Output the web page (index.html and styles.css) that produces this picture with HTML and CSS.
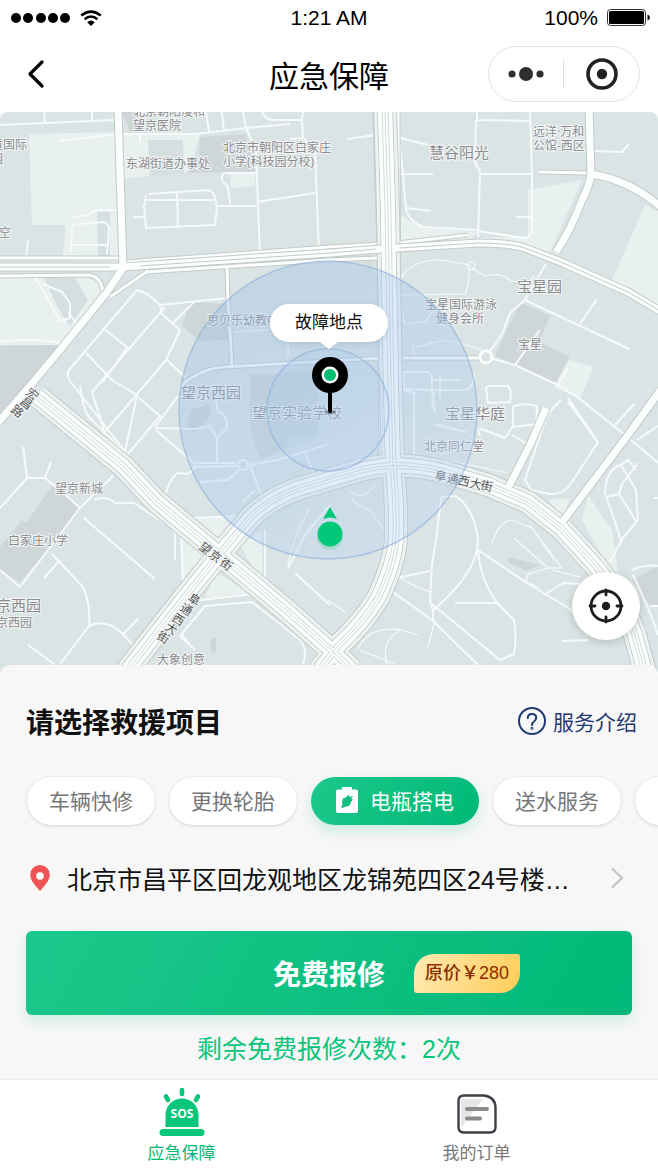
FILE: index.html
```html
<!DOCTYPE html>
<html lang="zh-CN">
<head>
    <meta charset="UTF-8">
    <meta name="viewport" content="width=device-width, initial-scale=1.0">
    <title>应急保障</title>
    <link rel="stylesheet" href="styles.css">
</head>
<body>
    <div class="page">
        <div class="status-bar">
            <div class="status-left">
                <svg width="60" height="12" viewBox="0 0 60 12">
                    <circle cx="5" cy="6" r="5"/><circle cx="17" cy="6" r="5"/><circle cx="30" cy="6" r="5"/><circle cx="42" cy="6" r="5"/><circle cx="54" cy="6" r="5"/>
                </svg>
                <svg width="22" height="17" viewBox="0 0 22 17" fill="none" stroke="#000" stroke-width="2.6">
                    <path d="M1.2 5.6Q11-2.4 20.8 5.6"/>
                    <path d="M4.6 9.2Q11 3.8 17.4 9.2"/>
                    <path d="M7.2 12.2Q11 8.8 14.8 12.2L11 16Z" fill="#000" stroke="none"/>
                </svg>
            </div>
            <span class="status-time">1:21 AM</span>
            <div class="status-right">
                <span>100%</span>
                <svg width="43" height="18" viewBox="0 0 43 18">
                    <rect x="0.5" y="0.5" width="38" height="16" rx="3" fill="#fff" stroke="#333"/>
                    <rect x="2" y="2" width="35" height="13" rx="1.5"/>
                    <path d="M40.500 5.500q2.500 1 2.500 3t-2.500 3z"/>
                </svg>
            </div>
        </div>

        <header class="nav-bar">
            <button class="back" type="button" aria-label="返回">
                <svg width="18" height="30" viewBox="0 0 18 30" fill="none" stroke="#000" stroke-width="3.200" stroke-linecap="round" stroke-linejoin="round"><path d="M15 3L3 15l12 12"/></svg>
            </button>
            <h1>应急保障</h1>
            <div class="capsule">
                <button type="button" aria-label="更多">
                    <svg width="36" height="16" viewBox="0 0 36 16" fill="#2e2e2e"><circle cx="4" cy="8" r="3.600"/><circle cx="18" cy="8" r="7"/><circle cx="32" cy="8" r="3.600"/></svg>
                </button>
                <button type="button" aria-label="关闭">
                    <svg width="32" height="32" viewBox="0 0 32 32"><circle cx="16" cy="16" r="14" fill="none" stroke="#222" stroke-width="3.600"/><circle cx="16" cy="16" r="5.200" fill="#222"/></svg>
                </button>
            </div>
        </header>

        <main>
            <section class="map" aria-label="地图">
                <svg class="map-canvas" viewBox="0 112 658 560" preserveAspectRatio="xMidYMid slice">
                    <defs>
                        <g id="highways">
                            <path d="M37 396L123 466L157 502L217 552L287 611L330 649L352 670"/>
                            <path d="M126 672L187 594L217 557L250 518Q270 498 300 488L361 470Q400 460 445 472L488 485L528 502L561 528L595 565Q622 598 635 635L645 672"/>
                            <path d="M385 108L388 210L391 390L393 465Q397 510 396 535Q396 560 378 598Q364 622 338 646L318 672"/>
                        </g>
                        <g id="roads">
                            <path d="M0 267H122L330 253L381 249L478 243Q510 243 525 248L561 262L628 292L662 312"/>
                            <path d="M118 108L123 268L107 292L60 350L35 380L-4 425"/>
                            <path d="M589 108L591 173Q590 185 582 200Q570 232 556 252"/>
                            <path d="M591 174Q630 180 662 208"/>
                            <path d="M662 388L628 435L563 521"/>
                            <path d="M508 488L530 445L546 408"/>
                        </g>
                        <g id="side-roads">
                            <path d="M125 262L330 247L379 244M145 272L330 260L378 258M397 243L468 235"/>
                            <path d="M227 267L228 300L232 366M182 385Q200 369 224 367L330 361L381 358M395 358H480"/>
                            <path d="M0 258H118M0 276L88 275Q101 276 103 292"/>
                            <path d="M148 271L110 297M375 112L379 250L381 460M398 112L399 460"/>
                            <path d="M539 172L590 173"/>
                        </g>
                        <linearGradient id="range" x1="0" y1="0" x2="0.600" y2="1">
                            <stop offset="0" stop-color="#94bce6" stop-opacity="0.400"/>
                            <stop offset="1" stop-color="#b5d1f3" stop-opacity="0.340"/>
                        </linearGradient>
                    </defs>

                    <rect class="land" x="0" y="112" width="658" height="560"/>

                    <g class="block-light">
                        <path d="M29 134L115 132L121 262L62 260L66 225L32 225Z"/>
                        <path d="M122 135L200 133L190 172L123 179ZM230 174H255V186L231 188Z"/>
                        <path d="M0 276H85L112 290L62 345H0ZM528 190L582 180L550 252L478 238L528 236Z"/>
                        <path d="M396 210Q410 224 426 228L478 232L470 240L397 241ZM645 205L658 212V312L612 280Z"/>
                        <path d="M560 357L594 367L580 398L555 388ZM180 530L206 552L182 584ZM192 520L238 515L218 543ZM240 545L262 530V584ZM216 572L250 593L205 598Z"/>
                        <path d="M548 500L570 498L562 518ZM588 495L582 520L604 560L620 585L612 530Z"/>
                    </g>
                    <g class="block-dark">
                        <path d="M200 137L245 134L256 172L187 173L199 156ZM122 112L130 132L143 131L140 112Z"/>
                        <path d="M0 346L62 345L30 383L0 412ZM182 326L190 302L228 304V340L200 341Z"/>
                        <path d="M520 302L550 316L539 342L570 357L556 383L495 356Z"/>
                        <path d="M54 484L82 508L20 582L0 570V547L22 520L26 523ZM250 375L318 372V436L260 460L250 430Z"/>
                        <path d="M190 410L210 404V415L196 432L187 430ZM507 557L540 565L526 571L508 562ZM632 580L658 566V605L650 606ZM210 640L216 638V652L211 653Z"/>
                    </g>
                    <g class="block-mid">
                        <path d="M148 140H183L184 174L150 176ZM44 278L75 278L88 300L70 326L58 308Z"/>
                        <path d="M287 437L318 434L312 443L287 446ZM372 269V242H365V278ZM97 212H110V260H98Z"/>
                    </g>

                    <!-- lanes and footpaths -->
                    <g class="lane">
                        <path d="M0 125L115 120M44 112L45 124M92 112V121M60 141L117 134M123 134L196 134L246 128L290 124M140 134V142M206 112L209 132M222 112L224 131M243 112L246 128L256 150L258 208L260 252"/>
                        <path d="M262 112Q266 120 273 120H302L303 112M302 120L303 138L290 139M303 138L315 150L319 252M257 202L315 193M223 173H256M223 173Q220 182 226 184Q229 188 230 204M217 206H256"/>
                        <path d="M148 194L208 190Q213 191 215 197L217 207L215 225L146 228L144 206L146 195M145 200L214 200M177 192L178 227M133 217H144M73 217L88 215L96 210H118"/>
                        <path d="M71 252L72 228Q73 224 79 224L104 222Q109 224 109 229L107 254M72 245H108M28 240L26 258"/>
                        <path d="M34 275L60 321L70 318V303L62 292L43 284M68 312L78 325M0 342Q30 337 62 343"/>
                        <path d="M137 290L69 370Q66 376 70 381L127 454M137 290Q147 292 160 305L228 298M160 305L162 314L180 330M128 346L103 382M165 307L92 392L105 434M103 328L128 348M86 353L112 380L137 395M194 302L172 324M180 330L166 360L103 434M137 395L125 452"/>
                        <path d="M80 385Q84 415 92 420L124 452M167 360L188 380M138 397L160 416L123 460M178 396L155 427M156 430L196 465M156 428L195 429L210 426L217 438L227 428Q228 414 218 412L216 400M217 439V463M196 463H235M192 467L237 466M200 482L228 480L239 470M250 465L263 500M243 502L255 490M250 465L278 460L329 444M305 452L314 475"/>
                        <path d="M113 476L80 508L60 490L45 478H27L0 508M27 478L23 447M45 478L51 462M80 508L20 587L0 570M84 518L155 579M52 554L83 587Q91 605 89 626M60 560L44 578M89 626Q106 618 123 634L133 645M89 626L60 664M28 645L54 664M123 634L139 618M94 500Q106 495 115 503H134L175 530V560M165 495Q172 475 178 473L188 474L198 466"/>
                        <path d="M190 518L244 516M181 530L183 582M265 530V580L285 600M200 600L254 594L290 624M180 636L205 606L252 602L300 640Q308 650 303 664M180 636L195 650M182 634L190 645M295 573L330 605M288 568L305 535L330 505"/>
                        <path d="M398 112L400 138L428 145M399 138L403 174L406 210Q410 222 423 227L478 230M400 174H433M406 208L431 211M477 112V120L530 121M476 120L475 162L481 174H532M480 175L478 237M530 112L532 174L532 225Q532 238 524 238L478 231M516 217H531M347 139L376 135M595 151L622 152L629 144"/>
                        <path d="M525 300L629 349M580 324L597 299M515 365L540 330M546 264L525 300L510 313L502 334L486 357"/>
                        <path d="M486 357L515 365L558 385L580 399L625 435L662 466M558 385L568 368M615 425L634 404M568 398L598 442L570 485Q562 495 550 494L531 490L525 480M561 400Q550 410 546 418L525 480M568 402Q575 410 598 443"/>
                        <path d="M404 372H428L432 376V390L404 389L403 374ZM432 380H460M440 375V398M404 390L414 393V458M435 412L432 390H466Q474 388 474 374M434 424L466 432M488 386H508Q512 390 510 402L488 403L486 388ZM513 407Q521 402 537 406L536 424L513 427ZM479 428L505 438L513 426M434 410Q430 400 435 393M478 430L480 436M512 435L527 444"/>
                        <path d="M620 465Q606 470 605 493Q612 513 621 540L638 520L636 490L621 465L628 460L636 470M606 497L619 494L636 521M619 494L622 484L638 463M605 570L622 540M637 440L658 426M654 498H658"/>
                        <path d="M441 497Q438 530 432 565L430 600L433 611L440 604Q478 570 478 540Q475 510 456 496L442 497M478 550L530 585L575 612M478 550Q480 580 498 604L514 620Q517 640 514 654L500 660L432 604M433 611V620M390 590L432 620L478 665M455 603H497M397 578L430 571M544 595L563 583L580 584"/>
                        <path d="M633 575Q650 610 658 635M632 570Q645 564 658 566M650 606H658M562 641L588 640"/>
                    </g>
                    <g class="path">
                        <path d="M400 280Q410 260 440 260L470 265L468 285L465 294L400 295M472 268L485 276Q500 272 510 280L525 284L535 276M412 348L445 340Q470 345 486 352M400 305L405 324L425 322L432 312M414 358L413 348"/>
                        <path d="M349 490Q360 500 368 492L376 485M349 492L355 503L370 510L384 530M328 600L345 612M358 648Q370 625 402 630L418 635M360 650L394 664M387 664Q380 640 402 630M435 620L428 647M492 543Q500 520 512 520L532 528L562 568L548 568L514 538M530 525L554 560M548 568L528 574L526 582L540 588M580 577L552 570M446 460L508 473M344 374V360M288 340V358M230 332L270 330M398 577Q420 590 433 592M310 507Q292 540 288 565"/>
                    </g>
                    <circle class="path" cx="471" cy="266" r="4"/>
                    <circle class="lane" cx="243" cy="465" r="5"/>

                    <use href="#side-roads" class="road side-edge"/>
                    <use href="#side-roads" class="road side-fill"/>
                    <use href="#highways" class="road service-edge"/>
                    <use href="#highways" class="road service-fill"/>
                    <use href="#highways" class="road highway-edge"/>
                    <use href="#highways" class="road highway-fill"/>
                    <use href="#roads" class="road road-edge"/>
                    <use href="#roads" class="road road-fill"/>
                    <use href="#highways" class="road highway-fill"/>
                    <use href="#highways" class="road divider-edge"/>
                    <use href="#highways" class="road divider-fill"/>
                    <use href="#highways" class="road center-line"/>
                    <path class="road road-line" d="M0 267H110M140 266L330 253L376 249M400 248L478 243Q510 243 525 248L561 262L628 292L662 312"/>
                    <circle cx="486" cy="357" r="6" fill="#dbe4e4" stroke="#fff" stroke-width="2.500"/>

                    <g class="label">
                        <text x="133" y="116">北京朝阳凌和</text>
                        <text x="133" y="130">望京医院</text>
                        <text x="-9" y="149">童国际</text>
                        <text x="-9" y="163">园</text>
                        <text x="-1" y="237">空</text>
                        <text x="126" y="168">东湖街道办事处</text>
                        <text x="223" y="152">北京市朝阳区白家庄</text>
                        <text x="223" y="166">小学(科技园分校)</text>
                        <text x="533" y="136">远洋·万和</text>
                        <text x="533" y="150">公馆-西区</text>
                        <text x="207" y="325">思贝乐幼教中心</text>
                        <text x="425" y="309">宝星国际游泳</text>
                        <text x="436" y="323">健身会所</text>
                        <text x="518" y="349">宝星</text>
                        <text x="424" y="451">北京同仁堂</text>
                        <text x="55" y="493">望京新城</text>
                        <text x="8" y="545">白家庄小学</text>
                        <text x="-4" y="627">京西园</text>
                        <text x="157" y="664">大象创意</text>
                    </g>
                    <g class="label label-large">
                        <text x="429" y="158">慧谷阳光</text>
                        <text x="517" y="292">宝星园</text>
                        <text x="181" y="398">望京西园</text>
                        <text x="252" y="418">望京实验学校</text>
                        <text x="445" y="419">宝星华庭</text>
                        <text x="-4" y="611">京西园</text>
                    </g>
                    <g class="label label-road">
                        <text x="25 19 10" y="394 403 411" rotate="38">宏昌路</text>
                        <text x="198 208 219" y="548 556 564" rotate="38">望京街</text>
                        <text x="187 179 171 164 156" y="600 610 620 629 638" rotate="32">阜通西大街</text>
                        <text x="434 446 457 469 480" y="479 482 484 487 489" rotate="12">阜通西大街</text>
                    </g>

                    <circle class="range" cx="328" cy="410" r="149"/>
                    <circle class="range inner" cx="328" cy="410" r="61"/>

                    <!-- fault location pin -->
                    <ellipse cx="330" cy="412" rx="6" ry="2" fill="#000" opacity="0.300"/>
                    <path d="M330 380V411" stroke="#000" stroke-width="4" stroke-linecap="round"/>
                    <circle cx="330" cy="375" r="18"/>
                    <circle cx="330" cy="375" r="8.500" fill="#fff"/>
                    <circle cx="330" cy="375" r="6" fill="#00bf73"/>

                    <!-- current position -->
                    <circle cx="330" cy="537" r="13" fill="#5c9" opacity="0.300"/>
                    <circle cx="330" cy="534" r="12.500" fill="#00c878"/>
                    <path d="M330 507L337 519Q330 516 323 519Z" fill="#00c878"/>
                </svg>
                <div class="tooltip">故障地点</div>
                <button class="locate" type="button" aria-label="定位">
                    <svg width="36" height="36" viewBox="0 0 36 36" fill="none" stroke="#1d1d1d" stroke-width="2.800" stroke-linecap="round">
                        <circle cx="18" cy="18" r="15"/>
                        <path d="M18 2v5M18 29v5M2 18h5M29 18h5"/>
                        <circle cx="18" cy="18" r="4.200" fill="#1d1d1d" stroke="none"/>
                    </svg>
                </button>
            </section>

            <section class="panel">
                <div class="panel-head">
                    <h2>请选择救援项目</h2>
                    <a class="intro" href="#intro">
                        <svg width="28" height="28" viewBox="0 0 28 28" fill="none" stroke="#1f3a73" stroke-width="2" stroke-linecap="round">
                            <circle cx="14" cy="14" r="13"/>
                            <path d="M9.800 11Q9.800 7 14 7t4.200 3.800Q18.200 13 16 14.500T14 18"/>
                            <circle cx="14" cy="21.300" r="0.500"/>
                        </svg>
                        服务介绍
                    </a>
                </div>

                <div class="services">
                    <button class="chip" type="button">车辆快修</button>
                    <button class="chip" type="button">更换轮胎</button>
                    <button class="chip active" type="button">
                        <svg width="22" height="26" viewBox="0 0 22 26">
                            <path d="M6 0h10v2.500h4q2 0 2 2V24q0 2-2 2H2q-2 0-2-2V4.500q0-2 2-2h4z" fill="#fff"/>
                            <path d="M7 11.500l2.500-1L13 7.500l.5 2.500L17 9l-1.800 3 1.800.5-2 2.500q-.5 4.500-5 4.500L6 21l-1-1 1.500-2.500q-1-3 .5-6z" fill="#11c07f"/>
                        </svg>
                        电瓶搭电
                    </button>
                    <button class="chip" type="button">送水服务</button>
                    <button class="chip" type="button" aria-label="更多服务"></button>
                </div>

                <a class="address" href="#address">
                    <svg width="20" height="26" viewBox="0 0 20 26">
                        <path d="M10 0a9.800 9.800 0 0 1 9.800 9.800C19.800 16 13 22.500 10 26 7 22.500.2 16 .2 9.800A9.800 9.800 0 0 1 10 0z" fill="#f05356"/>
                        <circle cx="10" cy="11" r="3.800" fill="#fff"/>
                    </svg>
                    <span class="address-text">北京市昌平区回龙观地区龙锦苑四区24号楼…</span>
                    <svg class="arrow" width="14" height="22" viewBox="0 0 14 22" fill="none" stroke="#c3c3c3" stroke-width="2.200"><path d="M2 1.500L12 11 2 20.500"/></svg>
                </a>

                <button class="submit" type="button">
                    <span class="submit-text">免费报修</span>
                    <span class="price">原价￥280</span>
                </button>
                <p class="remain">剩余免费报修次数：2次</p>
            </section>
        </main>

        <nav class="tab-bar">
            <a class="tab current" href="#rescue">
                <svg width="46" height="50" viewBox="0 0 46 50">
                    <path d="M6.500 40V28a16.500 16.500 0 0 1 33 0v12z" fill="#05c67a"/>
                    <rect x="0.500" y="42" width="45" height="7" rx="3.500" fill="#05c67a"/>
                    <path d="M23 3v4M7 9.500l2 3.500M39 9.500l-2 3.500" stroke="#05c67a" stroke-width="4.600" stroke-linecap="round"/>
                    <text class="sos" x="23" y="31" text-anchor="middle">SOS</text>
                </svg>
                应急保障
            </a>
            <a class="tab" href="#orders">
                <svg width="40" height="40" viewBox="0 0 40 40">
                    <path d="M7 1.500H27Q38.500 3 38.500 14V33Q38.500 38.500 33 38.500H7Q1.500 38.500 1.500 33V7Q1.500 1.500 7 1.500Z" fill="#fff" stroke="#3c3f45" stroke-width="2.400"/>
                    <path d="M4 5H26L4 34Z" fill="#e6e6e8"/>
                    <path d="M10 15h20M10 24.500h13" stroke="#8b8b8d" stroke-width="4" stroke-linecap="round"/>
                </svg>
                我的订单
            </a>
        </nav>
    </div>
</body>
</html>
```
FILE: styles.css
```css
* {
    box-sizing: border-box;
}
body {
    margin: 0;
    background-color: #ffffff;
    color: #111;
    font-family: "Liberation Sans", "Noto Sans CJK SC", sans-serif;
}
button {
    border: none;
    padding: 0;
    background: none;
    color: inherit;
    font-family: inherit;
    cursor: pointer;
}
a {
    color: inherit;
    text-decoration: none;
}
svg {
    display: block;
    flex-shrink: 0;
}
h1, h2, p {
    margin: 0;
}
.page {
    display: flex;
    flex-direction: column;
    min-height: 100vh;
}

/* top bars */
.status-bar {
    display: grid;
    grid-template-columns: 1fr auto 1fr;
    align-items: center;
    height: 36px;
    padding: 0 8px;
    color: #000;
    font-size: 21px;
}
.status-left, .status-right {
    display: flex;
    align-items: center;
    gap: 9px;
}
.status-left {
    padding-left: 3px;
}
.status-right {
    justify-content: flex-end;
}
.nav-bar {
    display: grid;
    grid-template-columns: 1fr auto 1fr;
    align-items: center;
    height: 76px;
    padding: 0 18px;
}
.nav-bar h1 {
    color: #000;
    font-size: 30px;
    font-weight: 400;
}
.back {
    justify-self: start;
    padding-left: 9px;
}
.capsule {
    display: flex;
    justify-self: end;
    width: 152px;
    height: 56px;
    border: 1px solid #e3e3e3;
    border-radius: 28px;
}
.capsule button {
    display: flex;
    flex: 1;
    align-items: center;
    justify-content: center;
    margin: 12px 0;
}
.capsule button + button {
    padding-left: 2px;
    border-left: 1px solid #e3e3e3;
}

/* map */
main {
    display: flex;
    flex: 1;
    flex-direction: column;
}
.map {
    position: relative;
    flex: 1;
    min-height: 560px;
    border-radius: 8px 8px 0 0;
    overflow: hidden;
}
.map-canvas {
    position: absolute;
    width: 100%;
    height: 100%;
}
.land {
    fill: #dbe4e4;
}
.block-light {
    fill: #e9f0f0;
}
.block-mid {
    fill: #d5dfdf;
}
.block-dark {
    fill: #ced6d7;
}
.lane, .path, .road {
    fill: none;
    stroke: #f6fafa;
    stroke-linejoin: round;
}
.lane {
    stroke-width: 2;
}
.path {
    stroke-width: 1.2;
}
.road {
    stroke: #fcfefe;
}
.side-edge, .service-edge, .highway-edge, .road-edge, .road-line {
    stroke: #c3caca;
}
.side-edge { stroke-width: 5; }
.side-fill { stroke-width: 3; }
.service-edge { stroke-width: 24; }
.service-fill { stroke-width: 22; stroke: #edf3f3; }
.highway-edge { stroke-width: 16; }
.highway-fill { stroke-width: 14; }
.road-edge { stroke-width: 9; }
.road-fill { stroke-width: 7; }
.divider-edge { stroke-width: 7; stroke: #d4dbdb; }
.divider-fill { stroke-width: 5; }
.center-line { stroke-width: 1; stroke: #d4dbdb; }
.road-line { stroke-width: 1; }
.label {
    fill: #8d8a8e;
    stroke: #f2f6f6;
    stroke-width: 2px;
    paint-order: stroke;
    font-family: "Noto Sans", "Noto Sans CJK SC", sans-serif;
    font-size: 12px;
}
.label-large {
    font-size: 15px;
}
.label-road {
    fill: #555;
}
.range {
    fill: url(#range);
    stroke: #8db1db;
    stroke-opacity: 0.6;
    stroke-width: 1.5;
}
.range.inner {
    fill-opacity: 0.6;
}
.tooltip {
    position: absolute;
    top: 192px;
    left: 50%;
    padding: 0 25px;
    border-radius: 19px;
    background-color: #ffffff;
    color: #111;
    font-size: 17px;
    line-height: 38px;
    white-space: nowrap;
    transform: translateX(-50%);
    box-shadow: 0 2px 6px rgba(60, 80, 100, 0.15);
}
.tooltip::after {
    content: "";
    position: absolute;
    top: 100%;
    left: 50%;
    border: 9px solid transparent;
    border-top: 7px solid #ffffff;
    border-bottom: none;
    transform: translateX(-50%);
}
.locate {
    position: absolute;
    right: 18px;
    bottom: 32px;
    display: flex;
    align-items: center;
    justify-content: center;
    width: 68px;
    height: 68px;
    border-radius: 50%;
    background-color: #ffffff;
    box-shadow: 0 2px 8px rgba(0, 0, 0, 0.18);
}

/* order panel */
.panel {
    position: relative;
    margin-top: -7px;
    padding: 36px 26px 12px;
    border-radius: 10px 10px 0 0;
    background-color: #f7f7f7;
}
.panel-head {
    display: flex;
    align-items: center;
    justify-content: space-between;
    height: 42px;
    margin-right: -5px;
    padding-bottom: 3px;
}
.panel-head h2 {
    font-size: 28px;
    font-weight: 700;
}
.intro {
    display: flex;
    align-items: center;
    gap: 7px;
    color: #1f3a73;
    font-size: 21px;
}
.services {
    display: flex;
    gap: 14px;
    margin: 24px -26px 14px;
    padding: 10px 0 20px 27px;
    overflow: hidden;
}
.chip {
    display: flex;
    flex-shrink: 0;
    align-items: center;
    gap: 12px;
    min-width: 128px;
    height: 48px;
    padding: 0 22px 3px;
    border-radius: 24px;
    background-color: #ffffff;
    color: #777;
    font-size: 21px;
    box-shadow: 0 0 2px rgba(0, 0, 0, 0.14), 0 2px 3px rgba(0, 0, 0, 0.07);
}
.chip.active {
    padding: 0 25px 3px;
    background: linear-gradient(120deg, #1cc88b, #00b877);
    color: #ffffff;
    box-shadow: 0 6px 14px rgba(0, 184, 119, 0.18);
}
.address {
    display: flex;
    align-items: center;
    gap: 17px;
    height: 40px;
    padding: 0 8px 2px 4px;
    font-size: 25px;
}
.address-text {
    overflow: hidden;
    text-overflow: ellipsis;
    white-space: nowrap;
}
.arrow {
    margin-left: auto;
}
.submit {
    display: grid;
    grid-template-columns: 1fr auto 1fr;
    align-items: center;
    width: 100%;
    height: 84px;
    margin-top: 32px;
    border-radius: 6px;
    background: linear-gradient(120deg, #1cc88b, #00b877);
    color: #ffffff;
    box-shadow: 0 6px 14px rgba(0, 184, 119, 0.16);
}
.submit-text {
    grid-column: 2;
    font-size: 28px;
    font-weight: 700;
}
.price {
    justify-self: start;
    margin-left: 29px;
    padding: 0 11px;
    border-radius: 20px 3px 20px 3px;
    background: linear-gradient(110deg, #ffe9b4, #ffcd57);
    color: #8a2e00;
    font-size: 18px;
    font-weight: 500;
    line-height: 39px;
}
.remain {
    margin-top: 17px;
    color: #0bc47c;
    font-size: 25px;
    line-height: 35px;
    text-align: center;
}

/* bottom tabs */
.tab-bar {
    display: flex;
    height: 91px;
    padding: 0 34px;
    border-top: 1px solid #ececec;
    background-color: #ffffff;
}
.tab {
    display: flex;
    flex: 1;
    flex-direction: column;
    align-items: center;
    justify-content: flex-end;
    gap: 7px;
    padding-bottom: 3px;
    color: #777;
    font-size: 17px;
    line-height: 26px;
}
.tab.current {
    gap: 4px;
    color: #05b973;
}
.sos {
    fill: #ffffff;
    font-family: "Open Sans", sans-serif;
    font-size: 12px;
    font-weight: 700;
}
```
